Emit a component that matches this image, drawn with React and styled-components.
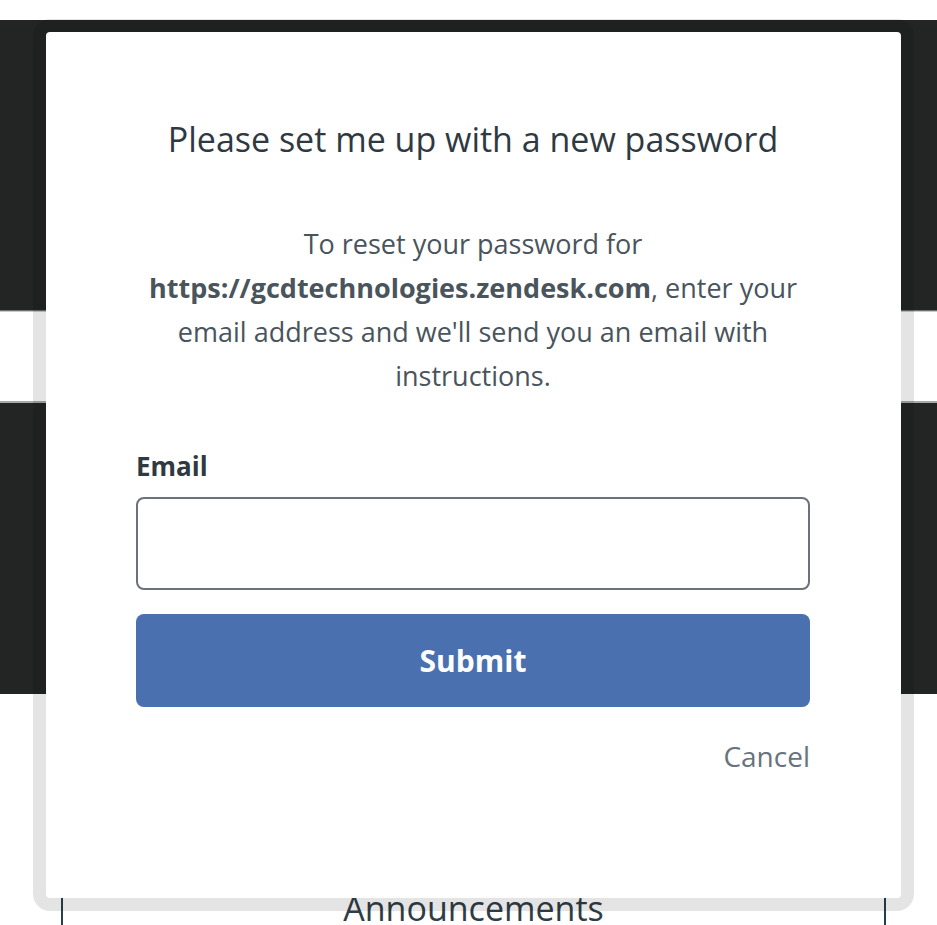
import React from 'react'
import styled, { createGlobalStyle } from 'styled-components'

const GlobalStyle = createGlobalStyle`
  html, body {
    margin: 0;
    padding: 0;
    background: #ffffff;
    font-family: "Open Sans", "Noto Sans", sans-serif;
  }
  body {
    overflow: hidden;
    height: 925px;
  }
`

// Page behind the dialog
const Page = styled.div`
  position: relative;
  padding-top: 20px;
  height: 905px;
  overflow: hidden;
`

const DarkBand = styled.div`
  background-color: #232424;
  height: ${props => props.h}px;
`

const NavStrip = styled.div`
  height: 90px;
  background-color: #ffffff;
  border-top: 1px solid #6e6e6e;
  box-shadow: inset 0 1px 0 #c9c9c9;
  border-bottom: 2px solid #a8a8a8;
`

const Section = styled.section`
  margin: 60px 0 0 61px;
  width: 821px;
  height: 300px;
  border-left: 2px solid #24414c;
  border-right: 2px solid #24414c;
  display: flex;
  justify-content: center;
  padding-top: 132px;
`

const SectionTitle = styled.h2`
  margin: 0;
  font-weight: 400;
  font-size: 34px;
  line-height: 44px;
  color: #2f3e46;
`

// Dialog
const Modal = styled.div`
  position: absolute;
  left: 33px;
  top: 19px;
  border: 13px solid rgba(0, 0, 0, 0.105);
  border-radius: 17px;
  background-color: #ffffff;
  background-clip: padding-box;
  display: flex;
  flex-direction: column;
  padding: 85px 91px 0 90px;
  box-sizing: content-box;
  width: 674px;
  height: 781px;
`

const Title = styled.h2`
  margin: 0;
  text-align: center;
  font-weight: 400;
  font-size: 34px;
  line-height: 44px;
  color: #2f3941;
`

const Intro = styled.p`
  margin: 61px 0 0;
  text-align: center;
  font-size: 27px;
  line-height: 44px;
  color: #49545c;

  strong {
    font-weight: 700;
    color: #49545c;
  }
`

const Label = styled.label`
  margin-top: 50px;
  font-weight: 700;
  font-size: 26px;
  line-height: 36px;
  color: #2f3941;
`

const Input = styled.input`
  margin-top: 13px;
  height: 93px;
  box-sizing: border-box;
  border: 2px solid #6b727a;
  border-radius: 8px;
  padding: 0 20px;
  font-size: 26px;
  font-family: inherit;
  outline: none;
`

const SubmitButton = styled.button`
  margin-top: 24px;
  height: 93px;
  border: none;
  border-radius: 8px;
  background-color: #4a70b0;
  color: #ffffff;
  font-family: inherit;
  font-weight: 700;
  font-size: 30px;
`

const CancelLink = styled.a`
  margin-top: 31px;
  align-self: flex-end;
  font-size: 28px;
  line-height: 36px;
  color: #68737d;
  text-decoration: none;
`

function App() {
  return (
    <>
      <GlobalStyle />
      <Page>
        <DarkBand h={290} />
        <NavStrip />
        <DarkBand h={291} />
        <Section>
          <SectionTitle>Announcements</SectionTitle>
        </Section>

        <Modal role="dialog">
          <Title>Please set me up with a new password</Title>
          <Intro>
            To reset your password for <strong>https://gcdtechnologies.zendesk.com</strong>, enter your email address and we'll send you an email with instructions.
          </Intro>
          <Label htmlFor="email">Email</Label>
          <Input id="email" type="email" />
          <SubmitButton>Submit</SubmitButton>
          <CancelLink href="#">Cancel</CancelLink>
        </Modal>
      </Page>
    </>
  )
}

export default App
